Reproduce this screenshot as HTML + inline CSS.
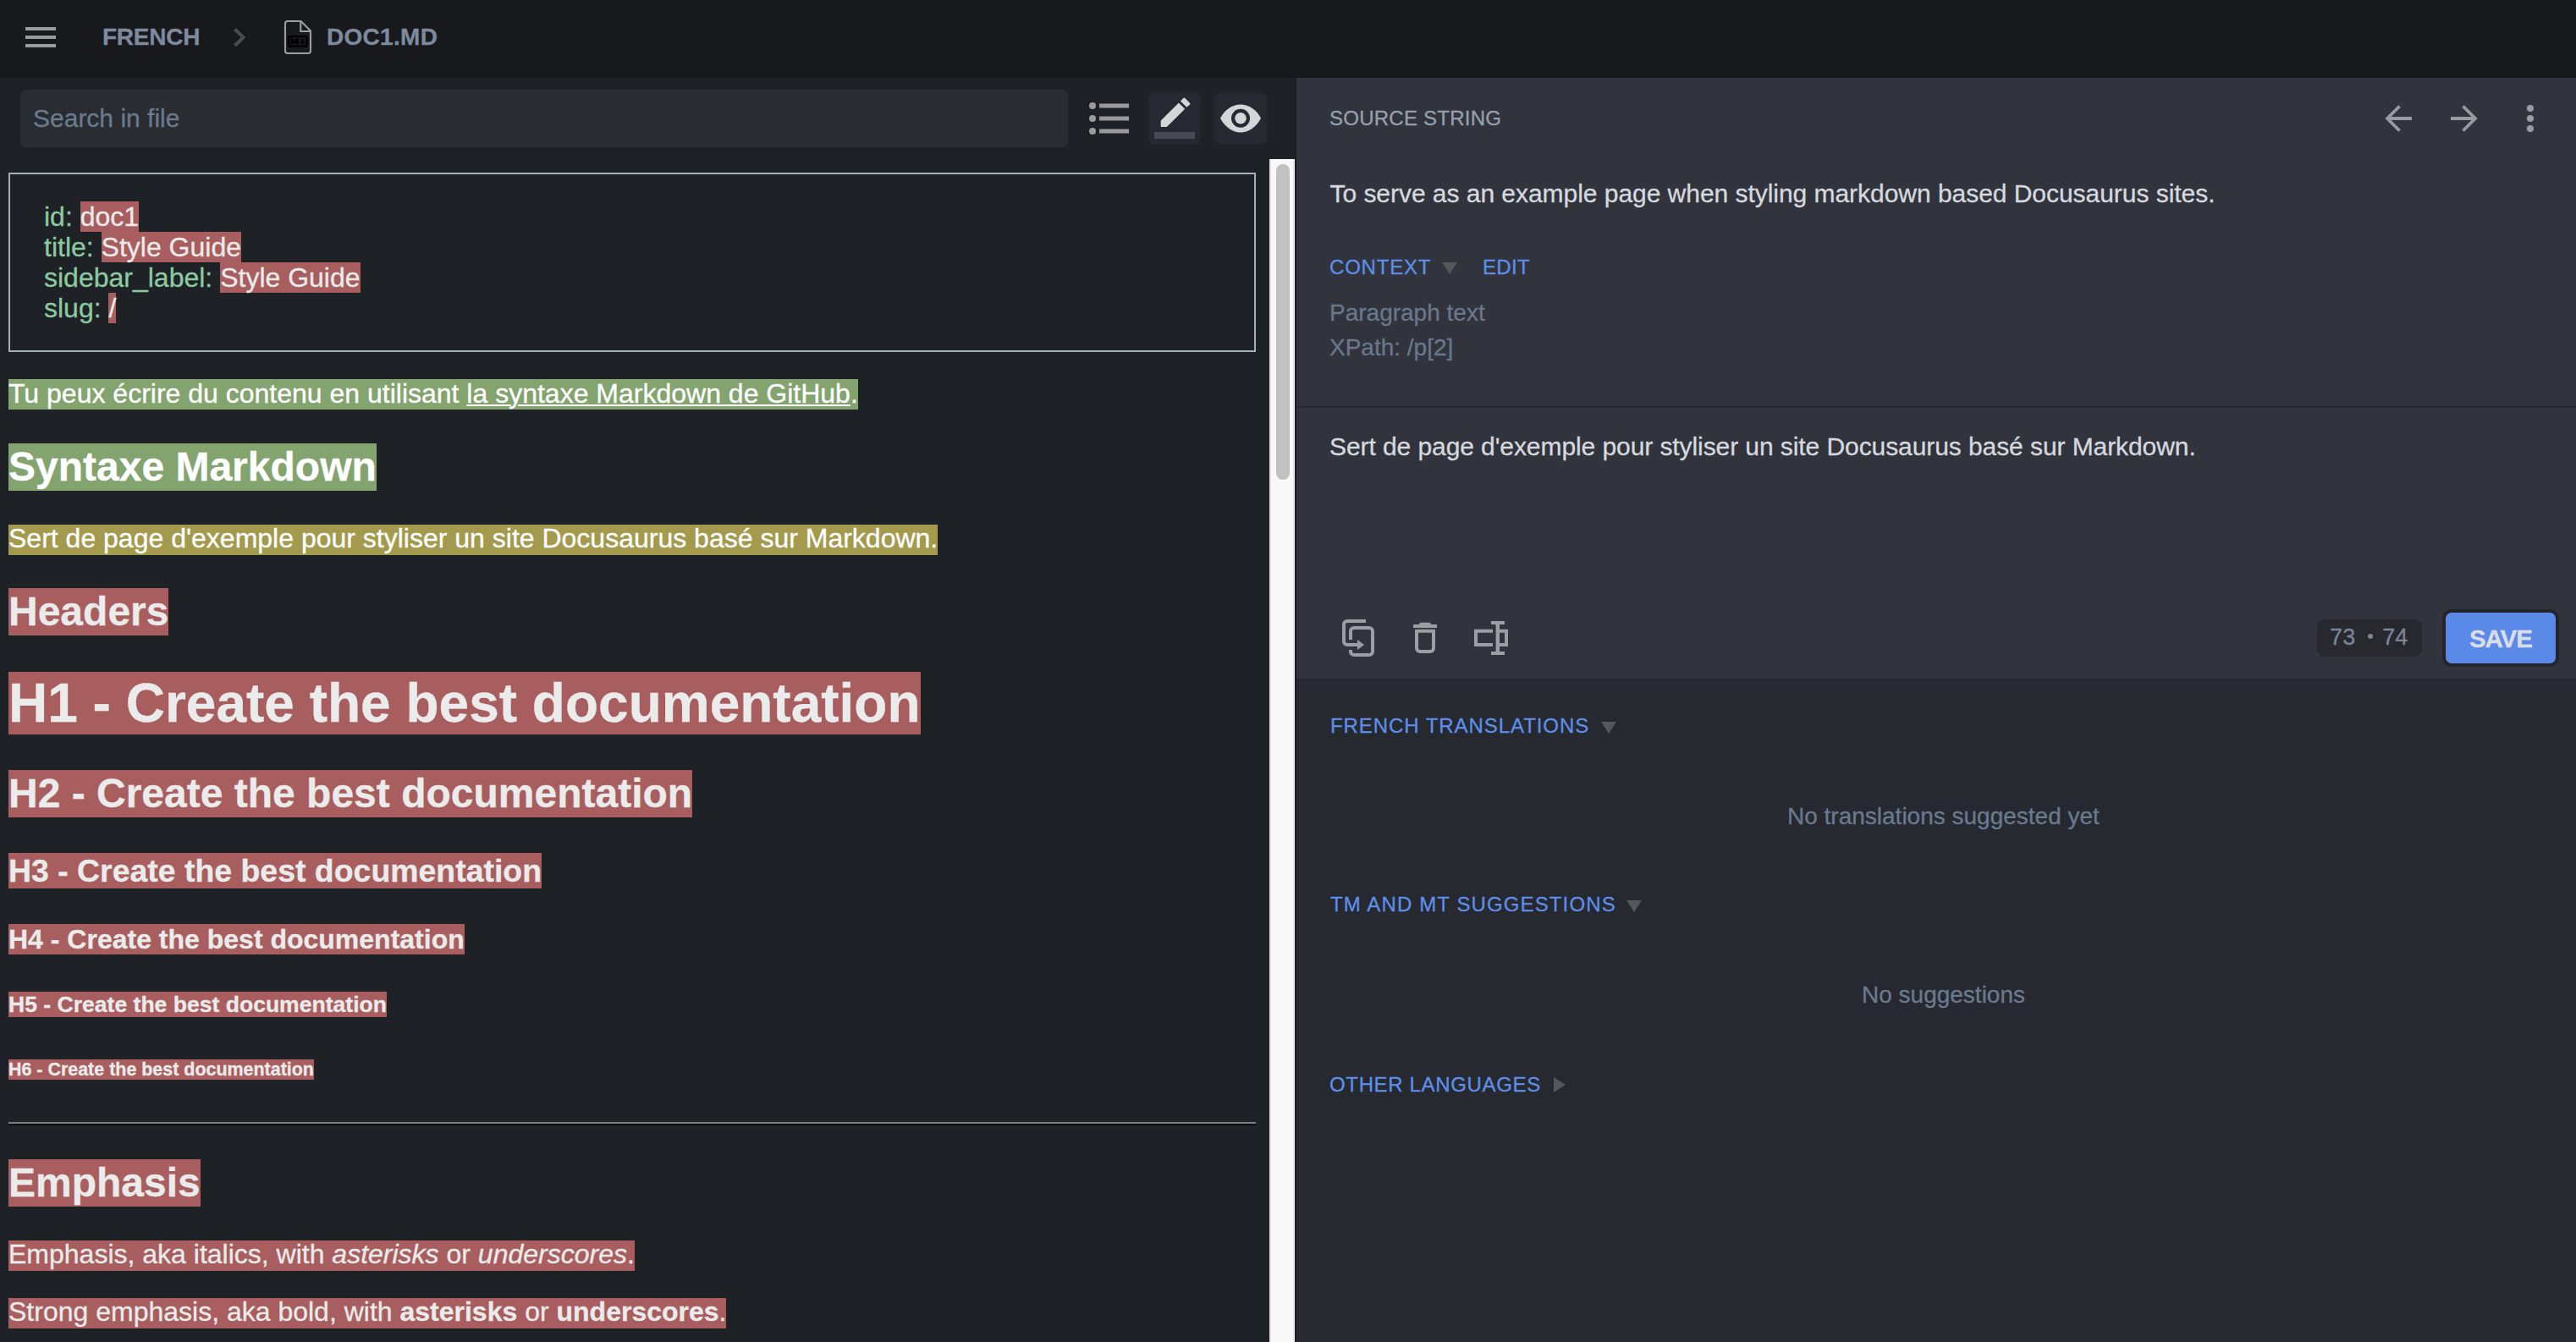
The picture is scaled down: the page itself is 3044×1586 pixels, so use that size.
<!DOCTYPE html>
<html><head><meta charset="utf-8">
<style>
html,body{margin:0;padding:0;}
body{-webkit-text-stroke:0.3px currentColor;width:3044px;height:1586px;overflow:hidden;position:relative;background:#1e2126;font-family:"Liberation Sans",sans-serif;}
.a{position:absolute;line-height:1;white-space:nowrap;}
#hdr{position:absolute;left:0;top:0;width:3044px;height:92px;background:#18191d;}
.bar{position:absolute;left:30px;width:36px;height:4px;background:#9b9b9b;}
.crumb{font-weight:bold;font-size:28px;color:#7e8a9d;letter-spacing:0.3px;}
#search{position:absolute;left:24px;top:106px;width:1238px;height:68px;border-radius:7px;background:#292c31;}
.btn{position:absolute;top:106px;width:67px;height:67px;border-radius:9px;background:#212328;}
.btn i{position:absolute;left:3.5px;top:3.5px;right:3px;bottom:3.5px;border-radius:6px;background:#262931;}
#track{position:absolute;left:1500px;top:188px;width:30px;height:1398px;background:#f8f8f8;box-shadow:inset 2px 0 0 #e2e2e2, inset -2px 0 0 #e8e8e8;}
#thumb{position:absolute;left:8px;top:6px;width:16px;height:373px;border-radius:8px;background:#c1c1c1;}
#content{position:absolute;left:10px;top:188px;width:1474px;font-size:32px;color:#eeeaea;}
#content p,#content h1,#content h2,#content h3,#content h4,#content h5,#content h6{}
.fm{margin-top:16px;border:2px solid #a4b1b1;padding:32px 40px;color:#8ccaa0;line-height:36px;white-space:pre;}
.r{--c:#a85e5e;background:var(--c);color:#ebebeb;}
.g{--c:#83a46f;background:var(--c);color:#ffffff;}
.y{--c:#a39a4e;background:var(--c);color:#ffffff;}
#content h1,#content h2,#content h3,#content h4,#content h5,#content h6{font-weight:bold;}
#content a{color:inherit;text-decoration:underline;text-underline-offset:2px;text-decoration-thickness:2px;}
hr{border:0;border-top:2px solid #7f7f7f;border-bottom:2px solid #0e0e0f;margin:16px 0 -2px;position:relative;top:-3px;}
#content h2 span{position:relative;top:-1px;padding:2px 0 2px;background:linear-gradient(var(--c),var(--c)) 0 1px/100% 100% no-repeat;}
#content p>span{position:relative;top:-1.5px;padding-bottom:1.5px;background:linear-gradient(var(--c),var(--c)) 0 1.5px/100% 100% no-repeat;}
#content h1 span{padding:1px 0 1px;}
#rp{position:absolute;left:1530px;top:92px;width:1514px;border-left:2px solid #1b1d22;box-sizing:border-box;height:1494px;background:#262930;}
#rtop{position:absolute;left:1532px;top:92px;width:1512px;height:388px;background:#31343d;}
#rsep{position:absolute;left:1532px;top:480px;width:1512px;height:2px;background:#25272d;}
#redit{position:absolute;left:1532px;top:482px;width:1512px;height:320px;background:#31343d;border-bottom:1px solid #22252b;}
.lbl{font-size:24px;color:#5f8fe8;letter-spacing:1.2px;}
.gray{color:#6b778a;}
.tri{position:absolute;width:0;height:0;border-left:9px solid transparent;border-right:9px solid transparent;border-top:14px solid #55575b;}
</style></head><body>
<div id="hdr">
  <div class="bar" style="top:32px"></div>
  <div class="bar" style="top:42px"></div>
  <div class="bar" style="top:52px"></div>
  <div class="a crumb" style="left:121px;top:30px;letter-spacing:-0.25px">FRENCH</div>
  <svg class="a" style="left:270px;top:28px" width="26" height="32" viewBox="0 0 26 32"><polyline points="7.5,6.5 17.5,16.3 7.5,26" fill="none" stroke="#4a4c51" stroke-width="4"/></svg>
  <svg class="a" style="left:325px;top:15px" width="60" height="60" viewBox="325 15 60 60">
    <path d="M340,25 H355.5 L367,36.5 V60 a3,3 0 0 1 -3,3 H340 a3,3 0 0 1 -3,-3 V28 a3,3 0 0 1 3,-3 Z" fill="none" stroke="#9d9d9d" stroke-width="2.1"/>
    <path d="M355.3,25 V37 H367" fill="none" stroke="#9d9d9d" stroke-width="2.1"/>
    <rect x="341.2" y="43" width="21.6" height="11.8" rx="2.2" fill="#141518" stroke="#000" stroke-width="2.1"/>
    <path d="M345,52.3 V46.6 L348.2,50 L351.4,46.6 V52.3" fill="none" stroke="#000" stroke-width="2.3" stroke-linejoin="miter"/>
    <path d="M357.6,46 V49.5" stroke="#000" stroke-width="2"/>
    <path d="M354.8,49 H360.4 L357.6,52.4 Z" fill="#000"/>
  </svg>
  <div class="a crumb" style="left:386px;top:30px">DOC1.MD</div>
</div>

<div id="search"></div>
<div class="a" style="left:39px;top:124.5px;font-size:30px;color:#6b7a8f">Search in file</div>

<svg class="a" style="left:1280px;top:115px" width="60" height="50" viewBox="0 0 60 50">
  <circle cx="11" cy="10" r="4" fill="#9a9a9a"/><circle cx="11" cy="25" r="4" fill="#9a9a9a"/><circle cx="11" cy="40" r="4" fill="#9a9a9a"/>
  <rect x="19" y="7.5" width="35" height="5" fill="#9a9a9a"/><rect x="19" y="22.5" width="35" height="5" fill="#9a9a9a"/><rect x="19" y="37.5" width="35" height="5" fill="#9a9a9a"/>
</svg>
<div class="btn" style="left:1354px"><i></i></div>
<svg class="a" style="left:1354px;top:106px" width="67" height="67" viewBox="0 0 67 67">
  <rect x="10" y="50" width="48" height="8" fill="#464a54"/>
  <path d="M17.7,36.6 L38.9,15.4 L46.2,22.7 L24.8,44.1 H17.7 Z" fill="#d4d5d7"/>
  <path d="M40.9,13.4 L44.3,10 a1.4,1.4 0 0 1 2,0 L52,15.7 a1.4,1.4 0 0 1 0,2 L48.2,20.7 Z" fill="#d4d5d7"/>
</svg>
<div class="btn" style="left:1432px"><i></i></div>
<svg class="a" style="left:1432px;top:106px" width="67" height="67" viewBox="0 0 67 67">
  <path d="M10,33.8 C15,24 24,17.5 34,17.5 C44,17.5 53,24 58,33.8 C53,43.5 44,50.5 34,50.5 C24,50.5 15,43.5 10,33.8 Z" fill="#d4d5d7"/>
  <circle cx="34" cy="33.8" r="11" fill="#262931"/>
  <circle cx="34" cy="33.8" r="6.8" fill="#d4d5d7"/>
</svg>

<div id="track"><div id="thumb"></div></div>

<div id="content">
<div class="fm">id: <span class="r">doc1</span>
title: <span class="r">Style Guide</span>
sidebar_label: <span class="r">Style Guide</span>
slug: <span class="r">/</span></div>
<p><span class="g">Tu peux écrire du contenu en utilisant <a>la syntaxe Markdown de GitHub</a>.</span></p>
<h2><span class="g">Syntaxe Markdown</span></h2>
<p><span class="y">Sert de page d'exemple pour styliser un site Docusaurus basé sur Markdown.</span></p>
<h2><span class="r">Headers</span></h2>
<h1><span class="r">H1 - Create the best documentation</span></h1>
<h2><span class="r">H2 - Create the best documentation</span></h2>
<h3 style="position:relative;top:2px"><span class="r">H3 - Create the best documentation</span></h3>
<h4><span class="r">H4 - Create the best documentation</span></h4>
<h5 style="position:relative;top:-1px"><span class="r">H5 - Create the best documentation</span></h5>
<h6 style="position:relative;top:-2px"><span class="r">H6 - Create the best documentation</span></h6>
<hr>
<h2><span class="r">Emphasis</span></h2>
<p><span class="r">Emphasis, aka italics, with <i>asterisks</i> or <i>underscores</i>.</span></p>
<p style="position:relative;top:-1px"><span class="r">Strong emphasis, aka bold, with <b>asterisks</b> or <b>underscores</b>.</span></p>
</div>

<div id="rp"></div>
<div id="rtop"></div>
<div id="rsep"></div>
<div id="redit"></div>

<div class="a" style="left:1571px;top:127.5px;font-size:24px;color:#97a1ae;letter-spacing:0.25px">SOURCE STRING</div>
<svg class="a" style="left:2812px;top:118px" width="44" height="44" viewBox="0 0 44 44"><path d="M38,22 H9 M23.5,7.5 L9,22 L23.5,36.5" fill="none" stroke="#9a9ba0" stroke-width="3.8"/></svg>
<svg class="a" style="left:2890px;top:118px" width="44" height="44" viewBox="0 0 44 44"><path d="M6,22 H35 M20.5,7.5 L35,22 L20.5,36.5" fill="none" stroke="#9a9ba0" stroke-width="3.8"/></svg>
<svg class="a" style="left:2978px;top:118px" width="24" height="44" viewBox="0 0 24 44"><circle cx="12" cy="10" r="4.1" fill="#9a9ba0"/><circle cx="12" cy="22" r="4.1" fill="#9a9ba0"/><circle cx="12" cy="34" r="4.1" fill="#9a9ba0"/></svg>

<div class="a" style="left:1571.5px;top:214.4px;font-size:30px;color:#d6d9df;letter-spacing:-0.04px">To serve as an example page when styling markdown based Docusaurus sites.</div>

<div class="a lbl" style="left:1571px;top:303.5px;letter-spacing:0.8px">CONTEXT</div>
<div class="tri" style="left:1704px;top:310px"></div>
<div class="a lbl" style="left:1752px;top:303.5px;letter-spacing:0.3px">EDIT</div>
<div class="a gray" style="left:1571px;top:356px;font-size:28px">Paragraph text</div>
<div class="a gray" style="left:1571px;top:396.5px;font-size:28px">XPath: /p[2]</div>

<div class="a" style="left:1571px;top:513.2px;font-size:30px;color:#d6d9df;letter-spacing:-0.08px">Sert de page d'exemple pour styliser un site Docusaurus basé sur Markdown.</div>

<svg class="a" style="left:1570px;top:720px" width="230" height="70" viewBox="1570 720 230 70">
  <g fill="none" stroke="#9c9ea3" stroke-width="4">
    <path d="M1614,734 H1592 a4,4 0 0 0 -4,4 V758 a4,4 0 0 0 4,4 H1605"/>
    <path d="M1596,756 V746 a4,4 0 0 1 4,-4 H1618 a4,4 0 0 1 4,4 V770 a4,4 0 0 1 -4,4 H1600 a4,4 0 0 1 -4,-4 V768"/>
    <path d="M1674,745.8 H1694 V766 a4,4 0 0 1 -4,4 H1678 a4,4 0 0 1 -4,-4 Z"/>
    <path d="M1764,745.8 H1744 V762 H1764"/>
    <path d="M1772,745.8 H1780 V762 H1772"/>
  </g>
  <path d="M1604,756 L1612,762 L1604,768 Z" fill="#9c9ea3"/>
  <rect x="1670" y="738" width="28" height="4" fill="#9c9ea3"/>
  <path d="M1676.5,738 L1678.5,735.8 H1689.5 L1691.5,738 Z" fill="#9c9ea3"/>
  <rect x="1767.6" y="737" width="4.4" height="34" fill="#9c9ea3"/>
  <path d="M1762,734 H1778 V738 H1773 Q1770,738 1769.8,740 Q1769.6,738 1766.6,738 H1762 Z" fill="#9c9ea3"/>
  <path d="M1762,774 H1778 V770 H1773 Q1770,770 1769.8,768 Q1769.6,770 1766.6,770 H1762 Z" fill="#9c9ea3"/>
</svg>

<div class="a" style="left:2738px;top:732px;width:124px;height:44px;border-radius:9px;background:#27292f"></div>
<div class="a" style="left:2753px;top:740px;font-size:27px;color:#7a8698;letter-spacing:0.2px">73 <span style="display:inline-block;width:6px;height:6px;border-radius:3px;background:#7a8698;vertical-align:middle;margin:0 11px 0 7px;position:relative;top:-3px"></span>74</div>
<div class="a" style="left:2886px;top:720px;width:138px;height:68px;border-radius:11px;background:#23252c"></div>
<div class="a" style="left:2890px;top:724px;width:130px;height:60px;border-radius:7px;background:#5b89e8"></div>
<div class="a" style="left:2918px;top:739.5px;font-size:29.5px;font-weight:bold;color:#d9dee6;letter-spacing:-1.1px">SAVE</div>

<div class="a lbl" style="left:1572px;top:845.5px;letter-spacing:0.93px">FRENCH TRANSLATIONS</div>
<div class="tri" style="left:1892px;top:852.5px"></div>
<div class="a gray" style="left:2112px;top:950.5px;font-size:28px;color:#6b7a8f">No translations suggested yet</div>

<div class="a lbl" style="left:1572px;top:1057px;letter-spacing:1.12px">TM AND MT SUGGESTIONS</div>
<div class="tri" style="left:1922px;top:1064px"></div>
<div class="a gray" style="left:2200px;top:1162px;font-size:28px;color:#6b7a8f">No suggestions</div>

<div class="a lbl" style="left:1571px;top:1269.5px;letter-spacing:0.65px">OTHER LANGUAGES</div>
<div class="a" style="left:1836px;top:1273px;width:0;height:0;border-top:9px solid transparent;border-bottom:9px solid transparent;border-left:14px solid #55575b"></div>

</body></html>
